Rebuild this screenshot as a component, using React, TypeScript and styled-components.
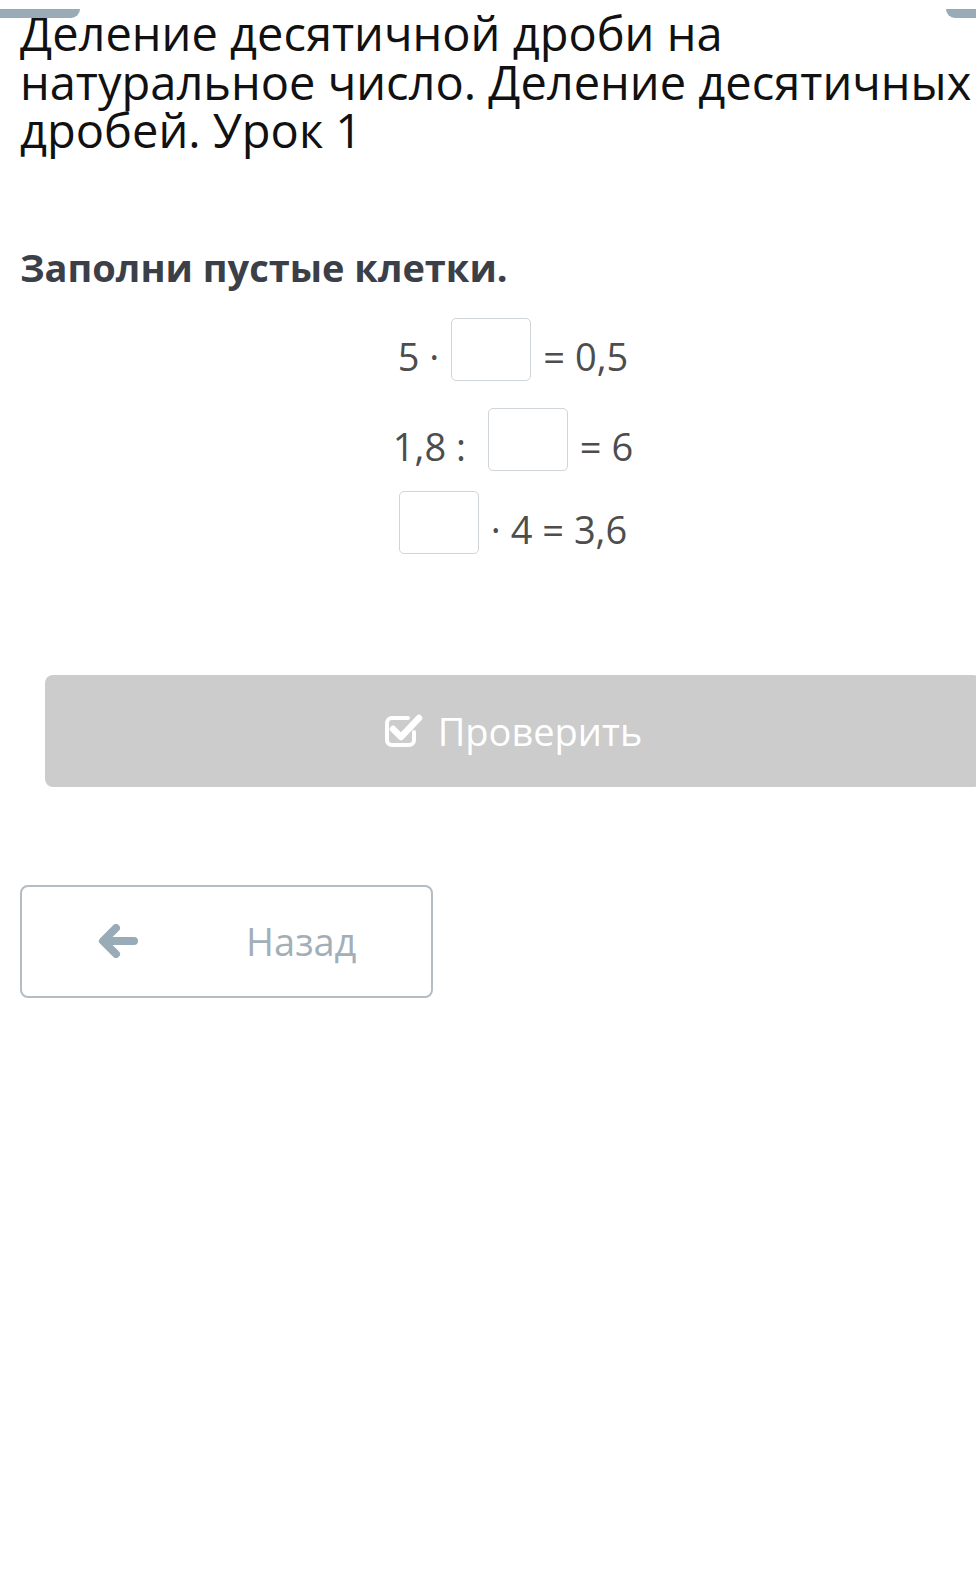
import { createGlobalStyle, styled } from "styled-components";

const GlobalStyle = createGlobalStyle`
  html, body {
    margin: 0;
    padding: 0;
    background: #ffffff;
    overflow-x: hidden;
  }
  body {
    font-family: "Open Sans", "Noto Sans", sans-serif;
  }
`;

const Page = styled.div`
  position: relative;
  width: 986px;
  padding: 0 0 0 20px;
`;

const TopTab = styled.div<{ $side: "left" | "right" }>`
  position: absolute;
  top: 0;
  height: 9px;
  background: #9aabb8;
  ${(p) =>
    p.$side === "left"
      ? "left: 0; width: 80px; border-radius: 0 0 10px 0;"
      : "left: 946px; width: 40px; border-radius: 0 0 0 10px;"}
`;

const Title = styled.h1`
  margin: 9px 0 0 0;
  font-size: 47px;
  line-height: 48.6px;
  font-weight: 400;
  color: #111111;
`;

const Task = styled.h2`
  margin: 87px 0 0 0;
  font-size: 38px;
  line-height: 50px;
  font-weight: 700;
  color: #3b4048;
`;

const Equations = styled.div`
  display: flex;
  flex-direction: column;
  align-items: center;
  margin-top: 26px;
`;

const Row = styled.div<{ $top: number }>`
  display: flex;
  align-items: center;
  gap: 12px;
  margin-top: ${(p) => p.$top}px;
  font-size: 38px;
  color: #4d4d4d;
  height: 63px;
  white-space: pre;
`;

const Term = styled.span`
  padding-top: 13px;
`;

const Cell = styled.div`
  width: 78px;
  height: 61px;
  border: 1px solid #cfd5d9;
  border-radius: 5px;
  background: #ffffff;
`;

const ButtonWrap = styled.div`
  padding: 121px 25px 0 25px;
`;

const CheckButton = styled.button`
  width: 100%;
  height: 112px;
  border: none;
  border-radius: 8px;
  background: #cccccc;
  color: #ffffff;
  font-family: "Open Sans", sans-serif;
  font-size: 38px;
  display: flex;
  align-items: center;
  justify-content: center;
  gap: 14px;
`;

const BackButton = styled.button`
  margin-top: 98px;
  width: 413px;
  height: 113px;
  border: 2px solid #b3bdc3;
  border-radius: 8px;
  background: #ffffff;
  display: flex;
  align-items: center;
  padding: 0 0 0 76px;
  font-family: "Open Sans", sans-serif;
  font-size: 38px;
  color: #a2afb8;
`;

const BackLabel = styled.span`
  margin-left: 108px;
`;

const CheckIcon = () => (
  <svg width="40" height="36" viewBox="0 0 40 36">
    <path
      d="M30 19 V27 a5 5 0 0 1 -5 5 H8 a5 5 0 0 1 -5 -5 V10 a5 5 0 0 1 5 -5 H24"
      fill="none"
      stroke="#ffffff"
      strokeWidth="4"
      strokeLinecap="round"
    />
    <path
      d="M9 16 L17 24 L35 5"
      fill="none"
      stroke="#ffffff"
      strokeWidth="6.5"
      strokeLinecap="round"
      strokeLinejoin="round"
    />
  </svg>
);

const ArrowIcon = () => (
  <svg width="40" height="34" viewBox="0 0 40 34">
    <path
      d="M18 4 L5 17 L18 30 M6 17 H36"
      fill="none"
      stroke="#9aabb8"
      strokeWidth="8"
      strokeLinecap="round"
      strokeLinejoin="round"
    />
  </svg>
);

export default function App() {
  return (
    <>
      <GlobalStyle />
      <Page>
        <TopTab $side="left" />
        <TopTab $side="right" />
        <Title>
          Деление десятичной дроби на
          <br />
          натуральное число. Деление десятичных
          <br />
          дробей. Урок 1
        </Title>
        <Task>Заполни пустые клетки.</Task>
        <Equations>
          <Row $top={0}>
            <Term>5 ·</Term>
            <Cell />
            <Term>= 0,5</Term>
          </Row>
          <Row $top={27}>
            <Term>{"1,8 : "}</Term>
            <Cell />
            <Term>= 6</Term>
          </Row>
          <Row $top={20}>
            <Cell />
            <Term>· 4 = 3,6</Term>
          </Row>
        </Equations>
        <ButtonWrap>
          <CheckButton>
            <CheckIcon />
            Проверить
          </CheckButton>
        </ButtonWrap>
        <BackButton>
          <ArrowIcon />
          <BackLabel>Назад</BackLabel>
        </BackButton>
      </Page>
    </>
  );
}
